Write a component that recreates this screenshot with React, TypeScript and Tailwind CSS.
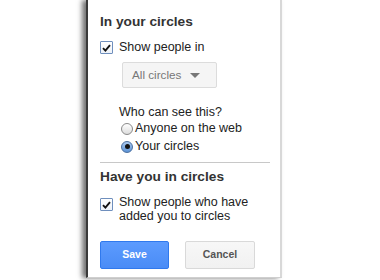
import React from "react";

function Check() {
  return (
    <div className="w-[13px] h-[13px] shrink-0 border border-[#6f8fbd] bg-gradient-to-b from-white to-[#eef2f8] flex items-center justify-center rounded-[1px]">
      <svg width="9" height="8" viewBox="0 0 9 8">
        <path d="M1 4.2 L3.4 6.6 L8 1.2" fill="none" stroke="#111" strokeWidth="1.9" />
      </svg>
    </div>
  );
}

function Radio({ on }: { on?: boolean }) {
  if (on) {
    return (
      <div className="w-[12px] h-[12px] shrink-0 rounded-full border border-[#4a6f9f] bg-gradient-to-b from-[#a9c8ee] to-[#5c93d6] flex items-center justify-center">
        <div className="w-[5px] h-[5px] rounded-full bg-[#111]" />
      </div>
    );
  }
  return (
    <div className="w-[12px] h-[12px] shrink-0 rounded-full border border-[#8a8a8a] bg-gradient-to-b from-white to-[#dcdcdc]" />
  );
}

export default function App() {
  return (
    <div
      className="w-[380px] h-[280px] bg-white overflow-hidden pl-[86px]"
      style={{ fontFamily: '"Liberation Sans", Arial, sans-serif' }}
    >
      <div className="w-[196px] h-[278px] bg-white border-l-2 border-[#3a3a3a] border-r-2 border-r-[#d8d8d8] border-b border-b-[#cfcfcf] shadow-[-4px_0_5px_rgba(0,0,0,0.55)] pl-[12px] pr-[10px] pt-[14px] flex flex-col">
        <div className="text-[13.7px] leading-[16px] font-bold text-[#333]">In your circles</div>
        <div className="mt-[10px] flex items-center h-[15px] gap-[6px] text-[12.5px] leading-[15px] text-[#222]">
          <Check />
          <span>Show people in</span>
        </div>
        <div className="mt-[7px] ml-[22px] w-[95px] h-[26px] border border-[#dcdcdc] bg-[#f5f5f5] rounded-[2px] flex items-center pl-[9px] gap-[9px]">
          <span className="text-[11.7px] text-[#777]">All circles</span>
          <svg width="10" height="5" viewBox="0 0 10 5">
            <path d="M0 0 L10 0 L5 5 Z" fill="#777" />
          </svg>
        </div>
        <div className="mt-[17px] ml-[19px] text-[12.5px] leading-[15px] text-[#222]">Who can see this?</div>
        <div className="mt-[1px] ml-[21px] flex items-center gap-[2px] text-[12.5px] leading-[15px] text-[#222]">
          <Radio />
          <span>Anyone on the web</span>
        </div>
        <div className="mt-[3px] ml-[21px] flex items-center gap-[2px] text-[12.5px] leading-[15px] text-[#222]">
          <Radio on />
          <span>Your circles</span>
        </div>
        <div className="mt-[8px] h-px w-[170px] bg-[#c8c8c8]" />
        <div className="mt-[6px] text-[13.7px] leading-[16px] font-bold text-[#333]">Have you in circles</div>
        <div className="mt-[11px] flex items-start gap-[6px] text-[12.5px] leading-[13.5px] text-[#222]">
          <div className="mt-[2px]">
            <Check />
          </div>
          <span>
            Show people who have
            <br />
            added you to circles
          </span>
        </div>
        <div className="mt-[18px] flex gap-[16px]">
          <div className="w-[69px] h-[28px] rounded-[2px] border border-[#3079ed] bg-gradient-to-b from-[#5c9bfe] to-[#4a8cf6] flex items-center justify-center text-[10.5px] font-bold text-white">
            Save
          </div>
          <div className="w-[70px] h-[28px] rounded-[2px] border border-[#d9d9d9] bg-gradient-to-b from-[#f7f7f7] to-[#f1f1f1] flex items-center justify-center text-[10.5px] font-bold text-[#555]">
            Cancel
          </div>
        </div>
      </div>
    </div>
  );
}
